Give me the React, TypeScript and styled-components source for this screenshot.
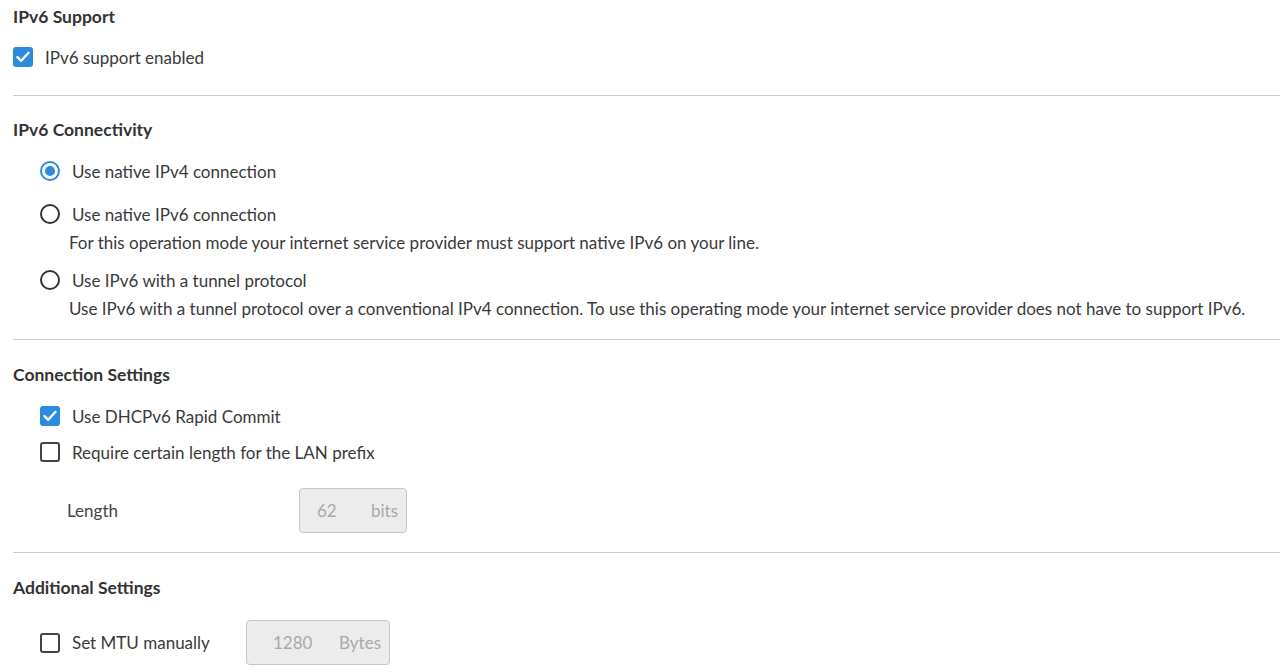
import React from 'react'
import styled, { createGlobalStyle } from 'styled-components'

const GlobalStyle = createGlobalStyle`
    html, body {
        margin: 0;
        padding: 0;
        background: #ffffff;
    }
    body {
        font-family: Lato, "Open Sans", sans-serif;
        color: #3a3a3a;
    }
`

const Page = styled.div`
    width: 1280px;
    padding-left: 13px;
    box-sizing: border-box;
`

const Section = styled.section<{ $top: number; $bottom: number; $last?: boolean }>`
    padding-top: ${p => p.$top}px;
    padding-bottom: ${p => p.$bottom}px;
    border-bottom: ${p => (p.$last ? 'none' : '1px solid #c9cccc')};
`

const Heading = styled.h3`
    margin: 0;
    font-size: 17.5px;
    font-weight: 700;
    line-height: 24px;
    color: #333333;
`

const Options = styled.div<{ $indent: number; $top: number }>`
    display: flex;
    flex-direction: column;
    margin-top: ${p => p.$top}px;
    padding-left: ${p => p.$indent}px;
`

const Option = styled.div<{ $gap?: number }>`
    margin-top: ${p => p.$gap ?? 0}px;
`

const Row = styled.label`
    display: flex;
    align-items: center;
    height: 32px;
    gap: 12px;
    font-size: 17px;
    cursor: pointer;
`

const Box = styled.span<{ $checked?: boolean }>`
    width: 20px;
    height: 20px;
    box-sizing: border-box;
    border-radius: 3px;
    flex-shrink: 0;
    display: flex;
    align-items: center;
    justify-content: center;
    background: ${p => (p.$checked ? '#2c8be0' : '#ffffff')};
    border: ${p => (p.$checked ? 'none' : '2px solid #444444')};
`

const Radio = styled.span<{ $checked?: boolean }>`
    width: 20px;
    height: 20px;
    box-sizing: border-box;
    border-radius: 50%;
    flex-shrink: 0;
    display: flex;
    align-items: center;
    justify-content: center;
    border: 2px solid ${p => (p.$checked ? '#2c8be0' : '#333333')};

    &::after {
        content: '';
        width: 10px;
        height: 10px;
        border-radius: 50%;
        background: #2c8be0;
        display: ${p => (p.$checked ? 'block' : 'none')};
    }
`

const Description = styled.div`
    padding-left: 29px;
    font-size: 17px;
    line-height: 24px;
    margin-top: 1px;
`

const FieldRow = styled.div<{ $top: number; $labelWidth: number }>`
    display: flex;
    align-items: center;
    margin-top: ${p => p.$top}px;

    & > :first-child {
        width: ${p => p.$labelWidth}px;
        box-sizing: border-box;
        flex-shrink: 0;
    }
`

const FieldLabel = styled.span`
    font-size: 17px;
    padding-left: 54px;
    color: #444444;
`

const UnitInput = styled.div<{ $width: number; $padLeft: number }>`
    width: ${p => p.$width}px;
    height: 45px;
    box-sizing: border-box;
    display: flex;
    align-items: center;
    justify-content: space-between;
    padding: 0 8px 0 ${p => p.$padLeft}px;
    background: #ececec;
    border: 1px solid #c6c6c6;
    border-radius: 4px;
    font-size: 17px;
    color: #a9a9a9;
`

const Check = () => (
    <svg width="14" height="12" viewBox="0 0 14 12">
        <path d="M1.5 6.2 L5.2 9.8 L12.5 1.8" fill="none" stroke="#ffffff" strokeWidth="2.4" strokeLinecap="round" strokeLinejoin="round" />
    </svg>
)

function CheckRow({ checked, label }: { checked?: boolean; label: string }) {
    return (
        <Row>
            <Box $checked={checked}>{checked && <Check />}</Box>
            <span>{label}</span>
        </Row>
    )
}

function RadioRow({ checked, label }: { checked?: boolean; label: string }) {
    return (
        <Row>
            <Radio $checked={checked} />
            <span>{label}</span>
        </Row>
    )
}

export default function App() {
    return (
        <>
            <GlobalStyle />
            <Page>
                <Section $top={5} $bottom={22}>
                    <Heading>IPv6 Support</Heading>
                    <Options $indent={0} $top={12}>
                        <CheckRow checked label="IPv6 support enabled" />
                    </Options>
                </Section>

                <Section $top={22} $bottom={18}>
                    <Heading>IPv6 Connectivity</Heading>
                    <Options $indent={27} $top={13}>
                        <Option>
                            <RadioRow checked label="Use native IPv4 connection" />
                        </Option>
                        <Option $gap={11}>
                            <RadioRow label="Use native IPv6 connection" />
                            <Description>
                                For this operation mode your internet service provider must support native IPv6 on your line.
                            </Description>
                        </Option>
                        <Option $gap={9}>
                            <RadioRow label="Use IPv6 with a tunnel protocol" />
                            <Description>
                                Use IPv6 with a tunnel protocol over a conventional IPv4 connection. To use this operating mode your internet service provider does not have to support IPv6.
                            </Description>
                        </Option>
                    </Options>
                </Section>

                <Section $top={23} $bottom={19}>
                    <Heading>Connection Settings</Heading>
                    <Options $indent={27} $top={13}>
                        <Option>
                            <CheckRow checked label="Use DHCPv6 Rapid Commit" />
                        </Option>
                        <Option $gap={4}>
                            <CheckRow label="Require certain length for the LAN prefix" />
                        </Option>
                    </Options>
                    <FieldRow $top={20} $labelWidth={286}>
                        <FieldLabel>Length</FieldLabel>
                        <UnitInput $width={108} $padLeft={17}>
                            <span>62</span>
                            <span>bits</span>
                        </UnitInput>
                    </FieldRow>
                </Section>

                <Section $top={23} $bottom={0} $last>
                    <Heading>Additional Settings</Heading>
                    <Options $indent={27} $top={20}>
                        <Option>
                            <FieldRow $top={0} $labelWidth={206}>
                                <CheckRow label="Set MTU manually" />
                                <UnitInput $width={144} $padLeft={26}>
                                    <span>1280</span>
                                    <span>Bytes</span>
                                </UnitInput>
                            </FieldRow>
                        </Option>
                    </Options>
                </Section>
            </Page>
        </>
    )
}
